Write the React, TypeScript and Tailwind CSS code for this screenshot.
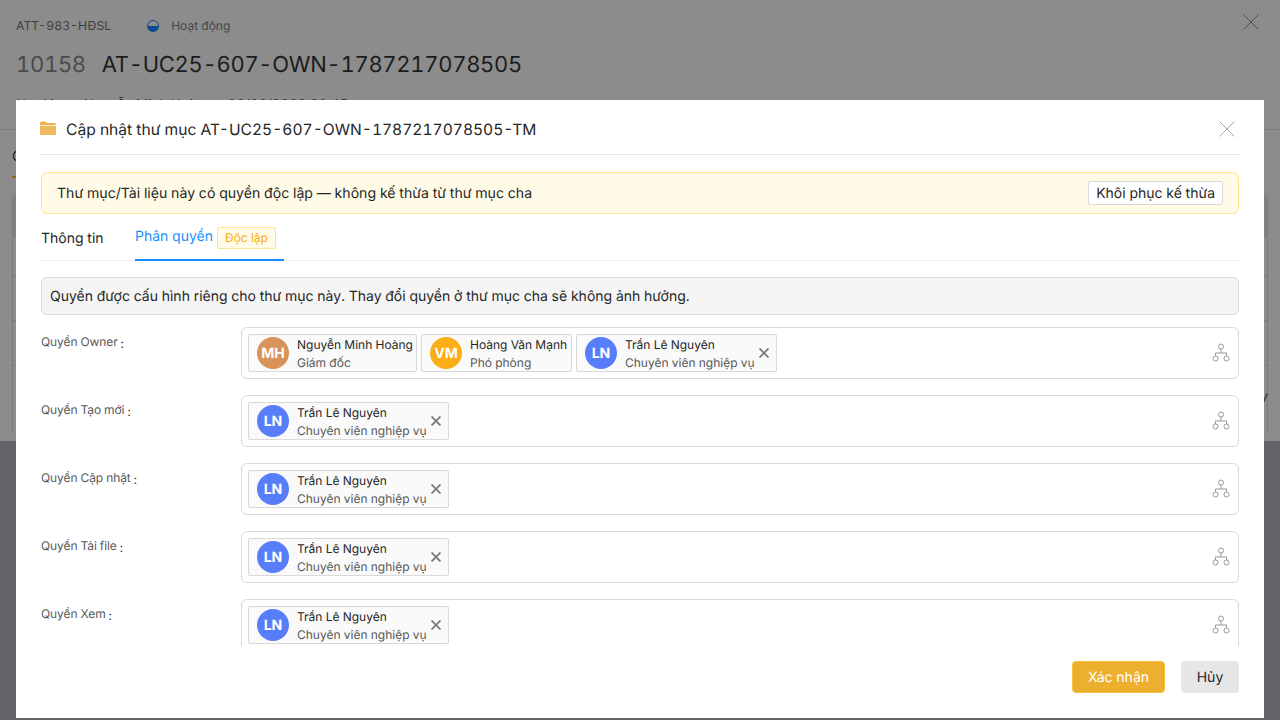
import React from "react";

function Org() {
  return (
    <svg width="18" height="20" viewBox="0 0 18 20" fill="none" stroke="#999999" strokeWidth="1" className="shrink-0">
      <circle cx="9" cy="3.5" r="2.5" />
      <circle cx="3.5" cy="15.500" r="2.5" />
      <circle cx="14.5" cy="15.500" r="2.5" />
      <path d="M9 6v4M3.5 13v-3h11v3" />
    </svg>
  );
}

function XIcon({ size, color }: { size: number; color: string }) {
  return (
    <svg width={size} height={size} viewBox="0 0 16 16" fill="none" stroke={color} strokeWidth="1" className="shrink-0">
      <path d="M0.5 0.5L15.5 15.5M15.5 0.5L0.5 15.5" />
    </svg>
  );
}

function Chip({ ini, color, name, role, close = false, w }: { ini: string; color: string; name: string; role: string; close?: boolean; w: string }) {
  return (
    <div className={`flex h-[38px] items-center rounded-[2px] border border-[#d9d9d9] bg-[#fafafa] pl-2 ${w}`}>
      <div className="flex h-8 w-8 shrink-0 items-center justify-center rounded-full text-[14px] font-bold text-white" style={{ backgroundColor: color }}>
        {ini}
      </div>
      <div className="ml-2 flex flex-col pt-[2px]">
        <span className="whitespace-nowrap text-[12px] leading-[18px] text-[#262626]">{name}</span>
        <span className="whitespace-nowrap text-[12px] leading-[18px] text-[#595959]">{role}</span>
      </div>
      {close && (
        <svg width="10" height="10" viewBox="0 0 10 10" stroke="#7a7a7a" strokeWidth="1.8" className="ml-[4px] shrink-0">
          <path d="M0.5 0.5L9.5 9.5M9.5 0.5L0.5 9.5" />
        </svg>
      )}
    </div>
  );
}

const LN = () => <Chip ini="LN" color="#587dfb" name="Trần Lê Nguyên" role="Chuyên viên nghiệp vụ" close w="w-[201px]" />;

function Row({ label, children }: { label: string; children: React.ReactNode }) {
  return (
    <div className="flex">
      <div className="w-[200px] shrink-0 pt-[6px] text-[12px] leading-[18px] tracking-[-0.1px] text-[#595959]">
        {label}
        <span className="ml-[3px] align-[-2px] text-[#262626]">:</span>
      </div>
      <div className="flex h-[52px] flex-1 items-center justify-between rounded-[6px] border border-[#d9d9d9] pl-[6px] pr-[8px]">
        <div className="flex gap-1">{children}</div>
        <Org />
      </div>
    </div>
  );
}

export default function App() {
  return (
    <div className="relative h-[720px] w-[1280px] overflow-hidden bg-[#636467] font-['Inter','Noto_Sans',sans-serif] tabular-nums [text-rendering:geometricPrecision]">
      {/* page behind the overlay */}
      <div className="h-[441px] bg-[#8c8c8c]">
        <div className="h-[130px] border-b border-[#7d7d7d] px-4 pt-[18px]">
          <div className="flex h-4 items-center justify-between">
            <div className="flex items-center text-[12.25px] leading-[16px] text-[#3f3f3f]">
              <span>ATT-983-HĐSL</span>
              <span className="ml-[36px] h-[12px] w-[12px] overflow-hidden rounded-full border border-[#0d4a8f] bg-[linear-gradient(#8c8c8c_45%,#0d4a8f_45%)]" />
              <span className="ml-[12px] text-[12px] text-[#464646]">Hoạt động</span>
            </div>
            <div className="mr-[5px] mb-[8px]"><XIcon size={16} color="#4f4f4f" /></div>
          </div>
          <div className="mt-[14px] flex items-center pt-[1px] text-[22px] leading-[32px] tracking-[-0.3px]">
            <span className="text-[#4a4a4a]">10158</span>
            <span className="ml-[16px] text-[#1c1c1c]">AT-UC25-607-OWN-1787217078505</span>
          </div>
          <div className="mt-[14px] text-[13.3px] leading-[20px] text-[#1c1c1c]">Người tạo: Nguyễn Minh Hoàng - 30/06/2026 08:45</div>
        </div>
        <div className="px-3 pt-[16px]">
          <div className="h-[32px] text-[14px] leading-[22px] text-[#1c1c1c]">C</div>
          <div className="-mt-[2px] h-[2px] w-[18px] bg-[#8a6a1c]" />
          <div className="mt-[15px] h-[240px] rounded-t-[6px] border-x border-[#7b7b7b]">
            <div className="h-[45px] rounded-t-[6px] bg-[#85807a]" />
            <div className="h-[38px] border-b border-[#7b7b7b]" />
            <div className="h-[45px] border-b border-[#7b7b7b]" />
            <div className="h-[45px] border-b border-[#7b7b7b]" />
            <div className="flex h-[67px] items-center justify-end text-[14px] italic text-[#1c1c1c]">/</div>
          </div>
        </div>
      </div>

      {/* dialog */}
      <div className="absolute left-4 top-[100px] flex h-[618px] w-[1248px] flex-col bg-white px-[25px]">
        <div className="-mx-px flex h-[55px] shrink-0 items-center justify-between border-b border-[#e3e8f2] pr-[5px] pt-[4px]">
          <div className="flex items-center">
            <svg width="16" height="14" viewBox="0 0 16 14" className="mb-[2px]">
              <path d="M0 2a1.5 1.5 0 0 1 1.5-1.500h4l1.500 1.500h7.500a1.500 1.500 0 0 1 1.500 1.500v.5H0z" fill="#e9b44c" />
              <path d="M0 4.700h16v7.800a1.500 1.500 0 0 1-1.500 1.500h-13a1.500 1.500 0 0 1-1.500-1.500z" fill="#ecb95c" />
            </svg>
            <span className="ml-[10px] pt-[1px] text-[15.6px] leading-[24px] text-[#262626]">Cập nhật thư mục AT-UC25-607-OWN-1787217078505-TM</span>
          </div>
          <XIcon size={16} color="#a6a6a6" />
        </div>

        <div className="mt-[17px] flex h-[42px] shrink-0 items-center justify-between rounded-[6px] border border-[#ffe58f] bg-[#fffbe6] pl-[15px] pr-[15px]">
          <span className="pt-[1px] text-[14.1px] text-[#262626]">Thư mục/Tài liệu này có quyền độc lập — không kế thừa từ thư mục cha</span>
          <span className="flex h-6 items-center rounded-[2px] border border-[#d9d9d9] bg-white px-[7px] text-[14px] text-[#262626]">Khôi phục kế thừa</span>
        </div>

        <div className="flex h-[47px] shrink-0 items-start border-b border-[#f0f0f0] text-[14px]">
          <span className="w-[62px] shrink-0 whitespace-nowrap pt-[15px] leading-[20px] text-[#262626]">Thông tin</span>
          <div className="ml-[32px] flex h-[47px] w-[149px] items-start border-b-2 border-[#1890ff] pt-[13px]">
            <span className="leading-[20px] text-[#1890ff]">Phân quyền</span>
            <span className="ml-1 flex h-[22px] items-center rounded-[2px] border border-[#ffe58f] bg-[#fffbe6] px-[7px] text-[12px] text-[#faad14]">Độc lập</span>
          </div>
        </div>

        <div className="mt-4 flex h-[38px] shrink-0 items-center rounded-[6px] border border-[#d9d9d9] bg-[#f5f5f5] px-2 text-[14px] text-[#262626]">
          Quyền được cấu hình riêng cho thư mục này. Thay đổi quyền ở thư mục cha sẽ không ảnh hưởng.
        </div>

        <div className="mt-3 flex h-[319px] shrink-0 flex-col gap-4 overflow-hidden">
          <Row label="Quyền Owner">
            <Chip ini="MH" color="#d9925a" name="Nguyễn Minh Hoàng" role="Giám đốc" w="w-[169px]" />
            <Chip ini="VM" color="#fbae17" name="Hoàng Văn Mạnh" role="Phó phòng" w="w-[151px]" />
            <LN />
          </Row>
          <Row label="Quyền Tạo mới"><LN /></Row>
          <Row label="Quyền Cập nhật"><LN /></Row>
          <Row label="Quyền Tải file"><LN /></Row>
          <Row label="Quyền Xem"><LN /></Row>
        </div>

        <div className="mt-[15px] flex justify-end gap-4">
          <span className="flex h-8 w-[93px] items-center justify-center rounded-[4px] border border-[#fac03d] bg-[#ecb02e] text-[14px] text-white">Xác nhận</span>
          <span className="flex h-8 w-[58px] items-center justify-center rounded-[4px] bg-[#e6e6e6] text-[14px] text-[#262626]">Hủy</span>
        </div>
      </div>
    </div>
  );
}
